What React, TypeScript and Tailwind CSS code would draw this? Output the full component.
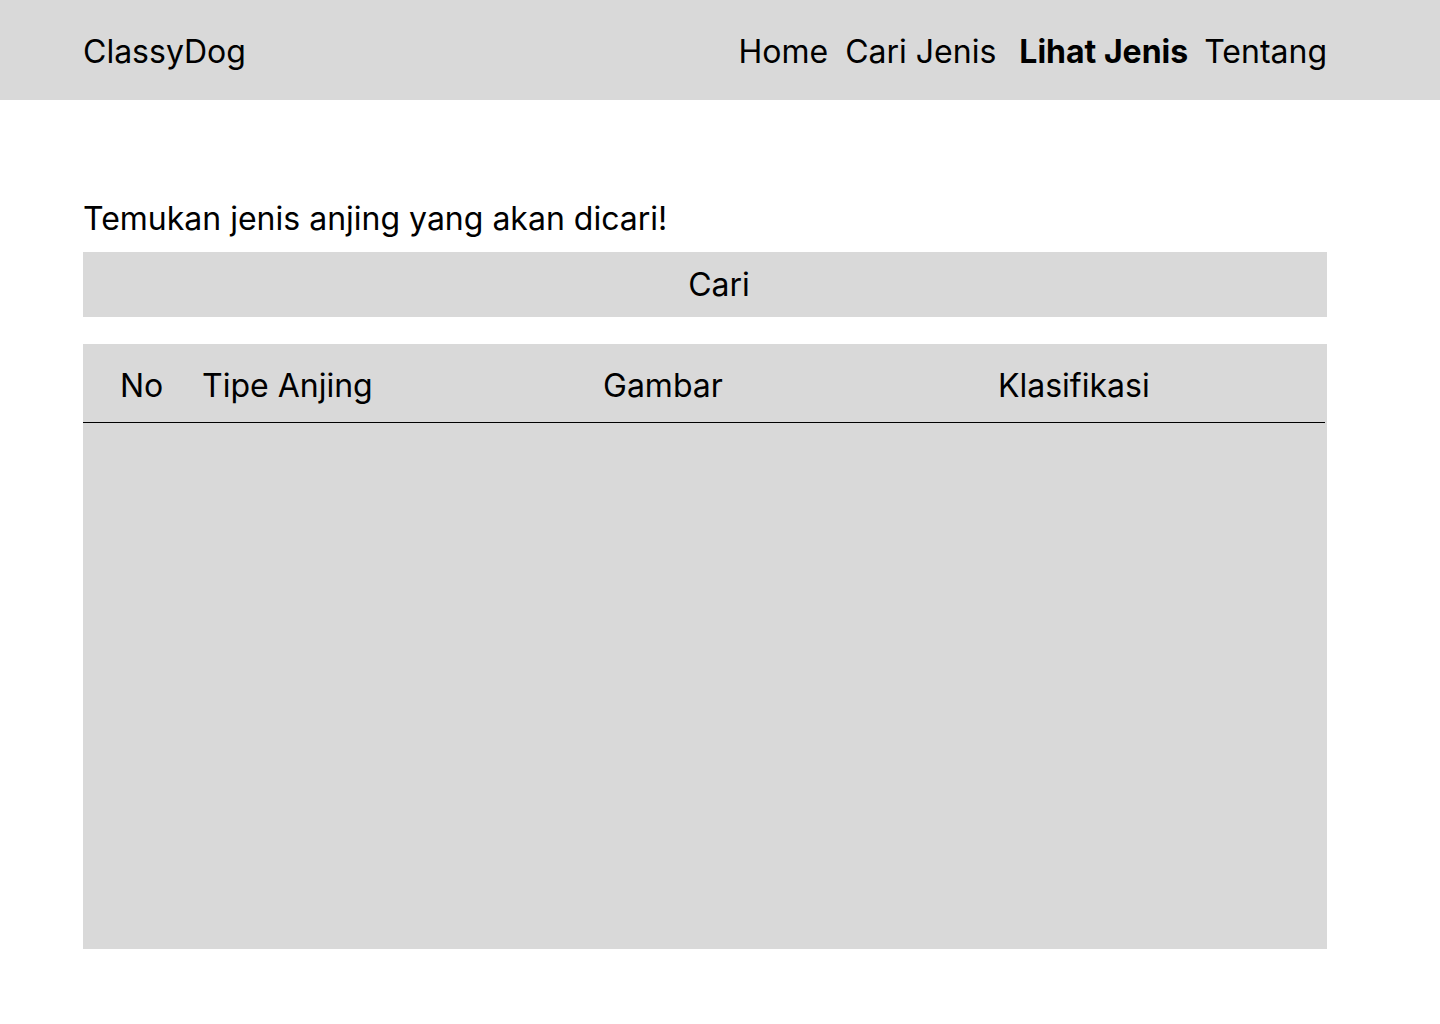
export default function App() {
  return (
    <div className="min-h-[1024px] w-[1440px] bg-white font-['Inter',sans-serif] text-[32px] leading-[39px] text-black">
      <header className="flex h-[100px] items-center justify-between bg-[#d9d9d9] pl-[83px] pr-[113px] pt-[2px]">
        <span>ClassyDog</span>
        <nav className="flex items-center">
          <a href="#">Home</a>
          <a href="#" className="ml-[17px]">Cari Jenis</a>
          <a href="#" className="ml-[23px] font-bold">Lihat Jenis</a>
          <a href="#" className="ml-[16px]">Tentang</a>
        </nav>
      </header>

      <main className="pl-[83px] pr-[113px] pt-[99px]">
        <h1 className="mb-[14px]">Temukan jenis anjing yang akan dicari!</h1>
        <button className="flex h-[65px] w-full items-center justify-center bg-[#d9d9d9] pl-[28px]">
          Cari
        </button>

        <div className="mt-[27px] flex h-[605px] flex-col bg-[#d9d9d9]">
          <div className="grid h-[78px] grid-cols-[119px_401px_395px_1fr] items-center pt-[4px]">
            <span className="pl-[37px]">No</span>
            <span>Tipe Anjing</span>
            <span>Gambar</span>
            <span>Klasifikasi</span>
          </div>
          <div className="mr-[2px] h-px bg-black" />
          <div className="flex-1" />
        </div>
      </main>
    </div>
  );
}
